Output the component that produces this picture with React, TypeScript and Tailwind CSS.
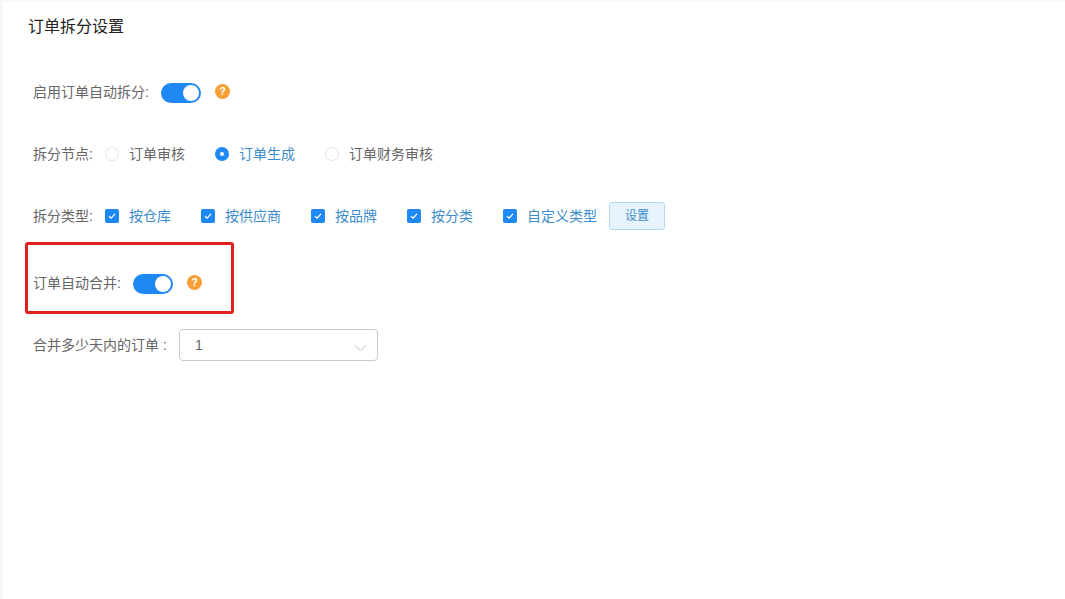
import React from "react";

function Switch() {
  return (
    <span className="mt-0.5 flex h-5 w-10 items-center justify-end rounded-full bg-[#1e88f5] pr-0.5">
      <span className="h-4 w-4 rounded-full bg-white" />
    </span>
  );
}

function Help() {
  return (
    <span className="-mt-px flex h-[15px] w-[15px] items-center justify-center rounded-full bg-[#f59f35] text-[11px] leading-none font-bold text-white">
      ?
    </span>
  );
}

function Radio({ checked, className }: { checked?: boolean; className?: string }) {
  return checked ? (
    <span className={`flex h-3.5 w-3.5 items-center justify-center rounded-full bg-[#1e88f5] ${className ?? ""}`}>
      <span className="h-1 w-1 rounded-full bg-white" />
    </span>
  ) : (
    <span className={`block h-3.5 w-3.5 rounded-full border border-[#e3e5ea] bg-white ${className ?? ""}`} />
  );
}

function Check({ label, className }: { label: string; className: string }) {
  return (
    <span className={`flex items-center ${className}`}>
      <span className="flex h-3.5 w-3.5 items-center justify-center rounded-[2px] bg-[#1e88f5]">
        <svg width="10" height="10" viewBox="0 0 10 10" fill="none">
          <path d="M2 5.2 L4.2 7.2 L8 2.8" stroke="#fff" strokeWidth="1.2" />
        </svg>
      </span>
      <span className="ml-2.5 text-[#3b8ccb]">{label}</span>
    </span>
  );
}

export default function App() {
  return (
    <div className="h-[599px] w-[1065px] overflow-hidden bg-[#f7f7f7] pt-0.5 pl-[3px] font-['Liberation_Sans','Noto_Sans_CJK_SC',sans-serif] text-sm text-[#666]">
      <div className="h-full bg-white pl-[22px]">
        <h1 className="flex h-[50px] items-center pl-[3px] text-base leading-none font-normal text-[#222]">
          订单拆分设置
        </h1>

        <div className="mt-6 flex h-8 items-center pl-2">
          <span className="w-[128px]">启用订单自动拆分:</span>
          <Switch />
          <span className="ml-3.5"><Help /></span>
        </div>

        <div className="mt-[30px] flex h-8 items-center pl-2">
          <span className="w-[72px]">拆分节点:</span>
          <Radio />
          <span className="ml-2.5">订单审核</span>
          <Radio checked className="ml-[30px]" />
          <span className="ml-2.5 text-[#3b8ccb]">订单生成</span>
          <Radio className="ml-[30px]" />
          <span className="ml-2.5">订单财务审核</span>
        </div>

        <div className="mt-[30px] flex h-8 items-center pl-2">
          <span className="w-[72px]">拆分类型:</span>
          <Check label="按仓库" className="" />
          <Check label="按供应商" className="ml-[30px]" />
          <Check label="按品牌" className="ml-[30px]" />
          <Check label="按分类" className="ml-[30px]" />
          <Check label="自定义类型" className="ml-[30px]" />
          <button className="ml-3 h-7 w-14 rounded-[3px] border border-[#b5d8f2] bg-[#e8f4fd] text-xs text-[#3b8ccb]">
            设置
          </button>
        </div>

        <div className="mt-2.5 flex h-[72px] w-[209px] items-center rounded-[3px] border-[3px] border-[#e0201c] pt-[10px] pl-[5px]">
          <span className="w-[100px] shrink-0">订单自动合并:</span>
          <Switch />
          <span className="ml-3.5"><Help /></span>
        </div>

        <div className="mt-[15px] flex h-8 items-center pl-2">
          <span className="w-[146px]">合并多少天内的订单 :</span>
          <div className="flex h-8 w-[199px] items-center justify-between rounded-[4px] border border-[#c9c9c9] pr-2.5 pl-[15px]">
            <span>1</span>
            <svg width="13" height="8" viewBox="0 0 13 8" fill="none" className="mt-1.5">
              <path d="M1 1.5 L6.5 6.5 L12 1.5" stroke="#c4c4c4" strokeWidth="1" />
            </svg>
          </div>
        </div>
      </div>
    </div>
  );
}
